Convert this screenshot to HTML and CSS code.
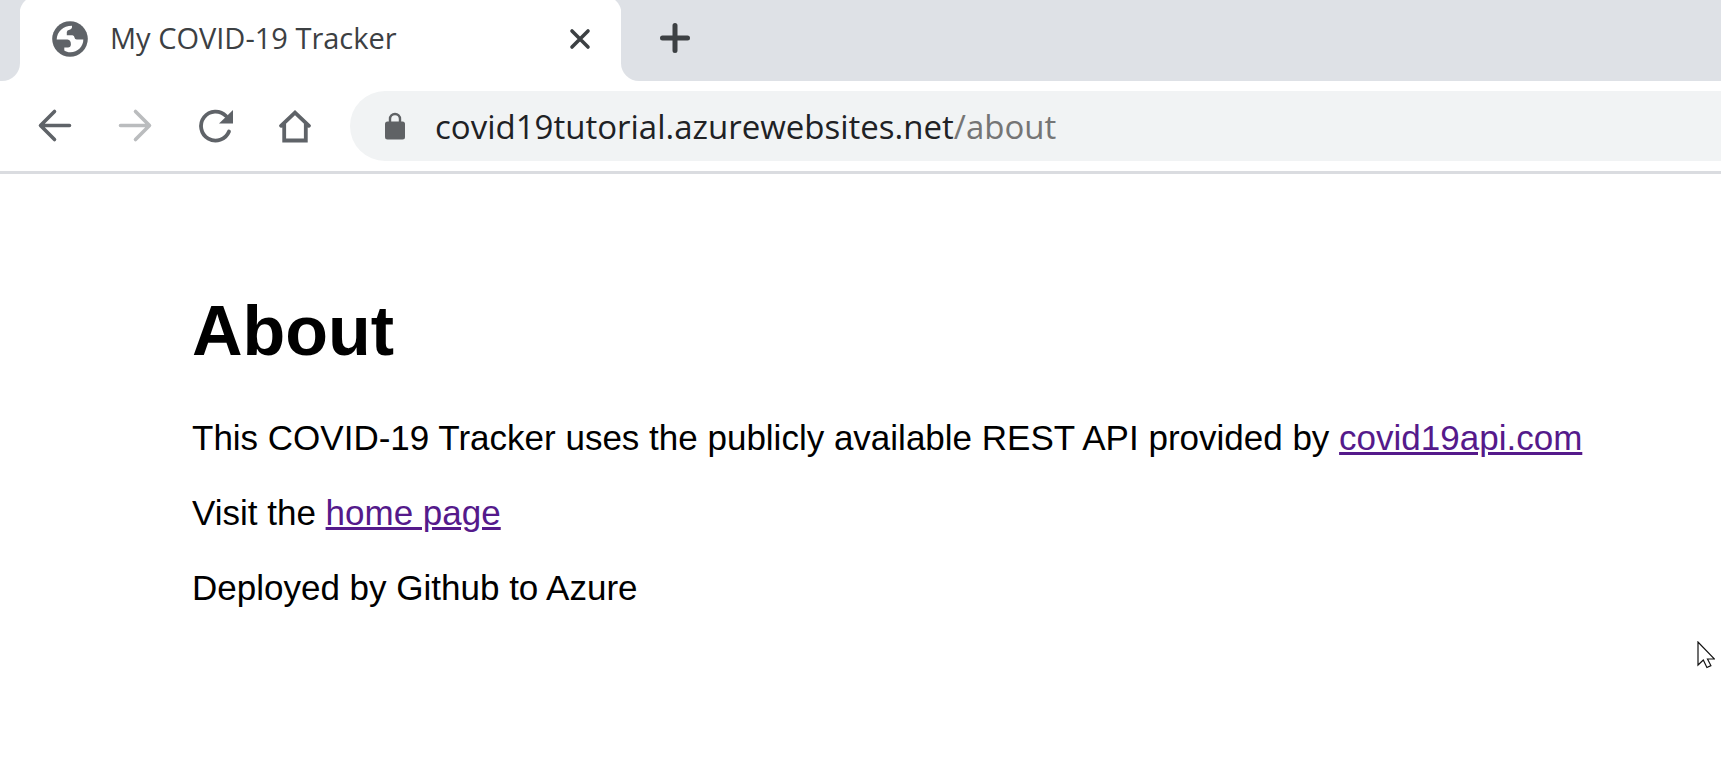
FILE: index.html
```html
<!DOCTYPE html>
<html lang="en">
<head>
<meta charset="utf-8">
<title>My COVID-19 Tracker</title>
<link rel="stylesheet" href="styles.css">
</head>
<body>
<header class="browser">
  <div class="tabstrip">
    <div class="strip-edge strip-edge-left"></div>
    <div class="tab">
      <svg class="globe" viewBox="0 0 36 36" aria-hidden="true"><circle cx="18" cy="18" r="17.8" fill="#5f6368"/><path d="M4.700 18.500C5 10.500 11 4.700 20 4.700V6.500Q19.500 8.500 17.500 8.800Q15 9 14.800 11V14.300H20.500Q22.300 14.500 22.500 16.500Q22.700 18.700 25 18.600H31.300C31.500 25.500 25.500 31.500 18 31.300C16 31.200 14 30.600 12.300 29.500V26.500H16Q18.700 26.300 18.900 23.500Q19 19 15.500 18.500Z" fill="#fff"/></svg>
      <span class="tab-title">My COVID-19 Tracker</span>
      <button class="icon-button close" aria-label="Close tab"><svg viewBox="0 0 20 20"><path d="M2 2l16 16M18 2L2 18" stroke="#3c4043" stroke-width="3.600" stroke-linecap="round"/></svg></button>
    </div>
    <div class="strip-edge strip-edge-right">
      <button class="icon-button new-tab" aria-label="New tab"><svg viewBox="0 0 30 30"><path d="M15 2.500v25M2.500 15h25" stroke="#3c4043" stroke-width="5" stroke-linecap="round"/></svg></button>
    </div>
  </div>
  <nav class="toolbar" aria-label="Browser">
    <div class="nav-buttons">
      <button class="icon-button nav" aria-label="Back"><svg viewBox="0 0 34 34"><path d="M31.500 16.500H3.500M16.500 2.500L2.500 16.500l14 14" fill="none" stroke="#5f6368" stroke-width="3.600" stroke-linecap="round" stroke-linejoin="round"/></svg></button>
      <button class="icon-button nav" aria-label="Forward" disabled><svg viewBox="0 0 34 34"><path d="M2.500 16.500h28M17.500 2.500l14 14-14 14" fill="none" stroke="#babcbe" stroke-width="3.600" stroke-linecap="round" stroke-linejoin="round"/></svg></button>
      <button class="icon-button nav" aria-label="Reload"><svg viewBox="0 0 34 34"><path d="M31 22.500A14.500 14.500 0 1 1 28 7" fill="none" stroke="#5f6368" stroke-width="3.800" stroke-linecap="round"/><path d="M35 1v13.500H21z" fill="#5f6368"/></svg></button>
      <button class="icon-button nav" aria-label="Home"><svg viewBox="0 0 34 34"><path d="M3 16.800L17 3.500l14 13.300M6.200 15v16.500h21.600V15" fill="none" stroke="#5f6368" stroke-width="3.800" stroke-linecap="round" stroke-linejoin="miter"/></svg></button>
    </div>
    <div class="omnibox">
      <svg class="lock" viewBox="0 0 20 28" aria-hidden="true"><rect y="9.500" width="20" height="18" rx="2.500" fill="#606265"/><path d="M5 11V7a5 5 0 0 1 10 0v4" fill="none" stroke="#606265" stroke-width="2.400"/></svg>
      <div class="address"><input class="host" type="text" aria-label="Address" size="26" value="covid19tutorial.azurewebsites.net"><span class="path">/about</span></div>
    </div>
  </nav>
</header>
<main class="page">
  <h1 class="heading">About</h1>
  <p class="text">This COVID-19 Tracker uses the publicly available REST API provided by <a class="link" href="#api">covid19api.com</a></p>
  <p class="text">Visit the <a class="link" href="#home">home page</a></p>
  <p class="text">Deployed by Github to Azure</p>
</main>
<svg class="pointer" viewBox="0 0 18 28" aria-hidden="true"><path d="M1 1v23l5.300-5 3.600 7.500 4-1.900L10.500 18H17.500z" fill="#fff" stroke="#111" stroke-width="1.200"/></svg>
</body>
</html>
```
FILE: styles.css
```css
* { box-sizing: border-box; }

body {
  margin: 0;
  background: #fff;
  color: #000;
  overflow-x: hidden;
  font-family: "Liberation Sans", Arial, sans-serif;
}

.browser {
  font-family: "Segoe UI", "Open Sans", sans-serif;
  border-bottom: 3px solid #dadce0;
}

.tabstrip {
  display: flex;
  height: 81px;
  background: #fff;
}

.strip-edge { background: #dee1e6; }
.strip-edge-left { width: 20px; border-bottom-right-radius: 18px; }
.strip-edge-right {
  flex: 1;
  display: flex;
  align-items: flex-start;
  padding: 23px 39px;
  border-bottom-left-radius: 18px;
}

.tab {
  display: flex;
  align-items: center;
  width: 601px;
  height: 78px;
  padding: 0 31px 0 32px;
  gap: 22px;
  background: radial-gradient(circle at 18px 14px, #fff 18px, #dee1e6 19px) 0 0 / 18px 14px no-repeat,
    radial-gradient(circle at 0 14px, #fff 18px, #dee1e6 19px) 100% 0 / 18px 14px no-repeat;
}

.globe { width: 36px; height: 36px; }
.tab-title {
  flex: 1;
  padding-bottom: 2px;
  font-size: 29px;
  line-height: 40px;
  color: #3c4043;
  white-space: nowrap;
}

.icon-button {
  display: flex;
  padding: 0;
  border: 0;
  background: none;
}
.icon-button svg { width: 100%; height: 100%; overflow: visible; }
.close { width: 20px; height: 20px; }
.new-tab { width: 30px; height: 30px; }
.nav { width: 34px; height: 34px; }

.toolbar {
  display: flex;
  align-items: center;
  padding: 10px 0 10px 38px;
}
.nav-buttons { display: flex; gap: 46px; margin-right: 38px; }

.omnibox {
  flex: 1;
  display: flex;
  align-items: center;
  gap: 30px;
  height: 70px;
  padding-left: 35px;
  border-radius: 35px 0 0 35px;
  background: #f1f3f4;
}
.lock { width: 20px; height: 28px; }
.address { display: flex; padding-top: 2px; font-size: 33px; line-height: 44px; }
.path { color: #757575; }
.host {
  field-sizing: content;
  padding: 0;
  border: 0;
  outline: 0;
  background: none;
  font: inherit;
  color: #202124;
}

.page { padding: 117px 40px 40px 192px; }
.heading { margin: 0 0 47px; font-size: 70px; line-height: 80px; }
.text { margin: 0 0 35px; font-size: 35px; line-height: 40px; }
.link { color: #551a8b; }

.pointer {
  position: absolute;
  right: 6px;
  top: 641px;
  width: 18px;
  height: 28px;
}
```
